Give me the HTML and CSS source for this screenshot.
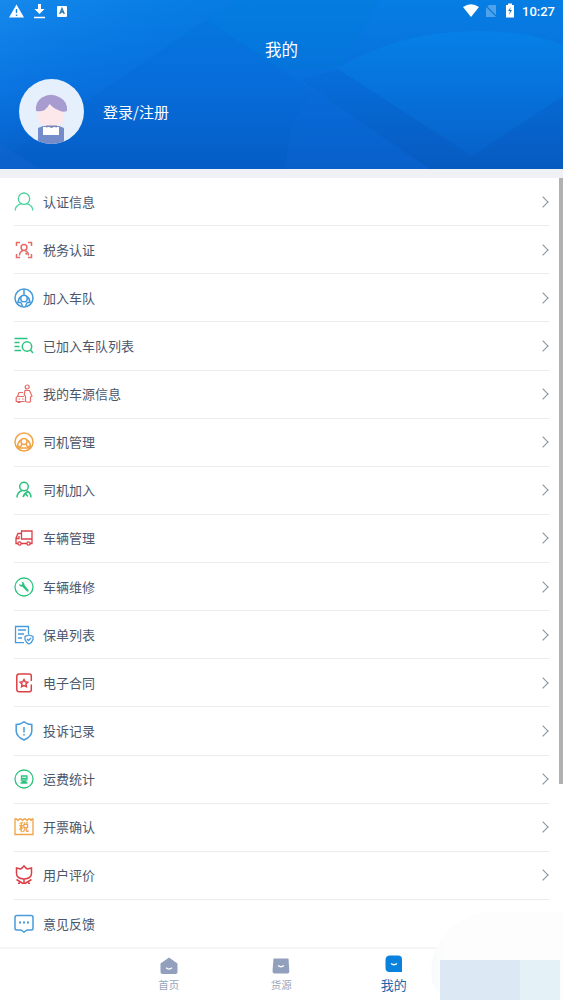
FILE: index.html
```html
<!DOCTYPE html>
<html lang="zh-CN">
<head>
<meta charset="utf-8">
<title>我的</title>
<link rel="stylesheet" href="styles.css">
</head>
<body>
<div class="app">
  <header class="hero">
    <svg class="hero-bg" viewBox="0 0 563 169" preserveAspectRatio="none">
      <defs>
        <linearGradient id="base" x1="0" y1="0" x2="0" y2="1"><stop offset="0" stop-color="#067ee3"/><stop offset=".5" stop-color="#086fdc"/><stop offset="1" stop-color="#065cc4"/></linearGradient>
        <linearGradient id="left" gradientUnits="userSpaceOnUse" x1="0" y1="0" x2="80" y2="145"><stop offset="0" stop-color="#1e8ef0" stop-opacity=".7"/><stop offset=".6" stop-color="#0a7ae6" stop-opacity=".3"/><stop offset="1" stop-color="#0a6ad8" stop-opacity="0"/></linearGradient>
        <linearGradient id="arc" x1="0" y1="0" x2="0" y2="1"><stop offset="0" stop-color="#0582e8" stop-opacity=".85"/><stop offset="1" stop-color="#0766cd" stop-opacity=".4"/></linearGradient>
        <linearGradient id="dark" x1="0" y1="0" x2="0" y2="1"><stop offset="0" stop-color="#0464d0" stop-opacity=".25"/><stop offset="1" stop-color="#085abb" stop-opacity=".5"/></linearGradient>
      </defs>
      <rect width="563" height="169" fill="url(#base)"/>
      <path d="M0 0H240L206 20 88 100 0 160Z" fill="url(#left)"/>
      <path d="M206 20 238 0H380L340 69 281 70Z" fill="#0079d8" fill-opacity=".3"/>
      <path d="M206 20 88 100 0 160V169H430L281 70Z" fill="#0863d5" fill-opacity=".18"/>
      <path d="M0 143 40 169H0Z" fill="#1767d2" fill-opacity=".4"/>
      <path d="M338 69Q395 32 475 31 530 31 563 45V96L472 156Z" fill="url(#arc)"/>
      <path d="M338 69 472 156 563 96V169H430L300 80Z" fill="url(#dark)"/>
      <path d="M313 91 430 169H286Q285 125 313 91Z" fill="#146fdd" fill-opacity=".18"/>
    </svg>
    <div class="status">
      <svg class="status-left" width="60" height="20" viewBox="0 0 60 20">
        <path d="M8.500 4.500 16 17.500H1Z" fill="#fff"/><path d="M8.500 9v4M8.500 14.500v1.500" stroke="#1684e4" stroke-width="1.400"/>
        <path d="M30 4h3v5h3.500l-5 5-5-5H30Z" fill="#fff"/><path d="M26 17.500h11" stroke="#fff" stroke-width="1.500"/>
        <rect x="49" y="6" width="10" height="11" rx="1" fill="#fff"/><path d="M51.700 14 54 8.500 56.300 14M52.500 12h3" fill="none" stroke="#2776b5" stroke-width="1.300"/>
      </svg>
      <div class="status-right">
        <svg width="54" height="20" viewBox="0 0 54 20">
          <path d="M0 7Q8 1.500 16 7L8 17Z" fill="#fff"/>
          <path d="M26 5h7v12H23V8Z" fill="#75b5f0" fill-opacity=".65"/><path d="m22 5 12 12" stroke="#087bdd" stroke-width="1.300"/>
          <path d="M43 5h2V3.500h4V5h2v12.500h-8Z" fill="#fff"/><path d="m48 7-3 4h2l-1 4 3-5h-2Z" fill="#1479c7"/>
        </svg>
        <span class="clock">10:27</span>
      </div>
    </div>
    <h1 class="title">我的</h1>
    <div class="profile">
      <svg class="avatar" width="65" height="65" viewBox="0 0 65 65">
        <defs><clipPath id="face"><circle cx="32.500" cy="32.500" r="32.500"/></clipPath></defs>
        <g clip-path="url(#face)">
          <rect width="65" height="65" fill="#e6effc"/>
          <path d="M19 29 31 25 45 30V40Q45 43 42 44L39 47H26L22 44Q19 43 19 39Z" fill="#fce7ea"/>
          <path d="M17 32Q16 23 23 18.500 32 13 41 18.500 49 23 48 32 44 34 39 31 34 29 30.500 25 26 34 17 32Z" fill="#a79bd0"/>
          <path d="M19 49 24 47H40L45 49V65H19Z" fill="#758cca"/>
          <path d="M24 48H40V56H24Z" fill="#fff"/><path d="M27 46.500h11v2l-3-.5-2.500 1-2.500-1-3 .5Z" fill="#7886bb"/>
        </g>
      </svg>
      <span class="login">登录/注册</span>
    </div>
  </header>
  <main class="list">
    <div class="row"><svg class="icon green-soft" viewBox="0 0 20 20"><circle cx="10" cy="6.700" r="5.700"/><path d="M1.300 18.500Q1 13.700 7.300 11.700M12.700 11.700Q19 13.700 18.700 18.500"/></svg><span class="label">认证信息</span><i class="chevron"></i></div>
    <div class="row"><svg class="icon red-soft bold" viewBox="0 0 20 20"><path d="M2.500 6V2.500H6M14 2.500h3.500V6M17.500 14v3.500H14M6 17.500H2.500V14"/><circle cx="10" cy="7.500" r="2.900"/><path d="M5.500 15.500q0-3.700 3.500-5M14.500 15.500q0-3.700-3.500-5M11.500 13l1.500 1.500"/></svg><span class="label">税务认证</span><i class="chevron"></i></div>
    <div class="row"><svg class="icon blue bold" viewBox="0 0 20 20"><circle cx="10" cy="10" r="9"/><circle cx="10" cy="10.500" r="3.300"/><path d="M10 1.200v6M7.200 8.500Q4.500 10 4.200 14M12.800 8.500q2.700 1.500 3 5.500M2.800 14.500h4L8.500 18M17.200 14.500h-4L11.500 18"/></svg><span class="label">加入车队</span><i class="chevron"></i></div>
    <div class="row"><svg class="icon green bold" viewBox="0 0 20 20"><path d="M.5 2.500h13M.5 6.500h5M.5 10.500h5M.5 14.500h6.500M16.500 14l2.500 3"/><circle cx="13" cy="10.500" r="4.700"/></svg><span class="label">已加入车队列表</span><i class="chevron"></i></div>
    <div class="row"><svg class="icon red-soft car" viewBox="0 0 20 20"><circle cx="13.200" cy="3" r="2"/><path d="M11 6.500h4.500l2.500 5.500-1.500 1v4.500q-1.500 1.500-5 0v-5l-1.300-2ZM9 8.500H5L3.500 12.500 2.200 13.500v4h8.300M4 17.500v1h2v-1M3.500 12.500H10M4.500 15H6M8 15h1.500"/></svg><span class="label">我的车源信息</span><i class="chevron"></i></div>
    <div class="row"><svg class="icon orange bold" viewBox="0 0 20 20"><circle cx="10" cy="10" r="9"/><circle cx="10" cy="9.500" r="3"/><path d="M7.200 8Q4 9.500 3.500 14.500H7M12.800 8q3.200 1.500 3.700 6.500H13M7 14.500l1-2.500M13 14.500 12 12M4 16h12"/></svg><span class="label">司机管理</span><i class="chevron"></i></div>
    <div class="row"><svg class="icon green bold" viewBox="0 0 20 20"><circle cx="10" cy="6.500" r="4.300"/><path d="M3 17.500q0-5 5-7M12 10.500q5 2 5 7M9 17q1-3.500 5-5.500M11.500 14l2.500 2.500"/></svg><span class="label">司机加入</span><i class="chevron"></i></div>
    <div class="row"><svg class="icon red" viewBox="0 0 20 20"><path d="M7.500 3H18v8H7.500ZM7.500 5.500H4L2 10v5.500h2M7 15.500h6M16 15.500h2V11M5 8v2.500H2.500"/><circle cx="5.500" cy="15.500" r="1.600"/><circle cx="14.500" cy="15.500" r="1.600"/></svg><span class="label">车辆管理</span><i class="chevron"></i></div>
    <div class="row"><svg class="icon green" viewBox="0 0 20 20"><circle cx="10" cy="10" r="9"/><path class="fill" d="M7.500 4.800Q10.500 5 10.500 8L14.500 13Q15 14 14.200 14.500 13.500 15 12.500 14L8.500 9.700Q5.500 10 5 7L7.200 8 8.500 7Z" stroke="none"/></svg><span class="label">车辆维修</span><i class="chevron"></i></div>
    <div class="row"><svg class="icon blue" viewBox="0 0 20 20"><path d="M10 17.700H1.500V1.500h13V9M4 5h8M4 9h6M4 13h4"/><path d="m15 10 4 1.500v3q-1 3-4 4.500-3-1.500-4-4.500v-3ZM13 14l1.500 1.500L17 13"/></svg><span class="label">保单列表</span><i class="chevron"></i></div>
    <div class="row"><svg class="icon red bold" viewBox="0 0 20 20"><path d="M17.300 8V3q0-2-2-2h-10q-2.500 0-2.500 2.500v13q0 2.300 2.500 2.300h10q2 0 2-2V11.500"/><path d="m10 6.500 1.200 2.300 2.600.4-1.800 1.900.4 2.600-2.400-1.100-2.400 1.100.4-2.600-1.800-1.900 2.600-.4Z"/></svg><span class="label">电子合同</span><i class="chevron"></i></div>
    <div class="row"><svg class="icon blue bold" viewBox="0 0 20 20"><path d="M10 .8Q14 3.500 17.800 3.500V10q0 5.500-7.800 9-7.800-3.500-7.800-9V3.500Q6 3.500 10 .8ZM10 6v5.500M10 13v1.500"/></svg><span class="label">投诉记录</span><i class="chevron"></i></div>
    <div class="row"><svg class="icon green" viewBox="0 0 20 20"><circle cx="10" cy="10" r="9"/><path d="M7.500 7h5.500v2.500H7.500ZM6.500 11.200h7M7.500 12.700h5M6.500 14h7"/></svg><span class="label">运费统计</span><i class="chevron"></i></div>
    <div class="row"><svg class="icon orange" viewBox="0 0 20 20"><path d="M1 2h1.500L4 3.500 5.500 2h1.500L8.500 3.500 10 2h1.500L13 3.500 14.500 2H16l1 1.500L18 2h1v15.500H1Z"/><text class="stamp" x="5" y="14">税</text></svg><span class="label">开票确认</span><i class="chevron"></i></div>
    <div class="row"><svg class="icon red bold" viewBox="0 0 20 20"><path d="M6.500 4Q8 3.500 10 1q2 2.500 3.500 3L17.500 3v5.500q0 5-7.500 5.500-7.500-.5-7.500-5.500V3ZM10 14v5M2.500 14.500 9 18.500M17.500 14.500 11 18.500M4 18.200h2M14 18.200h2"/></svg><span class="label">用户评价</span><i class="chevron"></i></div>
    <div class="row last"><svg class="icon blue bold" viewBox="0 0 20 20"><path d="M3 1.500h14q2 0 2 2v11q0 1.500-2 1.500h-4l-3 2-3-2H3q-2 0-2-1.500v-11q0-2 2-2Z"/><path d="M5 8.500h2M9 8.500h2M13 8.500h2" stroke-width="2"/></svg><span class="label">意见反馈</span><i class="chevron"></i></div>
  </main>
  <nav class="tabs">
    <div class="tab"><svg width="18" height="18" viewBox="0 0 18 18"><path d="M9 .5 17.500 6.500V15q0 2-2 2H2.500q-2 0-2-2V6.500Z" fill="#929fbd"/><path d="M6 10.800q3 2.500 6 0" fill="none" stroke="#fff" stroke-width="1.300"/></svg><span>首页</span></div>
    <div class="tab"><svg width="18" height="18" viewBox="0 0 18 18"><path d="M1.500 1.500h15L17.300 14q.2 2.500-2 2.500H2.500q-2 0-2-2.500Z" fill="#929fbd"/><path d="M6 8.500q3 2.500 6 0" fill="none" stroke="#fff" stroke-width="1.300"/></svg><span>货源</span></div>
    <div class="tab active"><svg width="18" height="18" viewBox="0 0 18 18"><path d="M5 .5h8q4 0 4 4V17H4.500q-4 0-4-4V5Q.5.500 5 .5Z" fill="#0882dc"/><path d="M6 8.500q3 2.500 6 0" fill="none" stroke="#fff" stroke-width="1.300"/></svg><span>我的</span></div>
  </nav>
  <div class="scrollbar"></div>
  <div class="float"><div class="swatch swatch-a"></div><div class="swatch swatch-b"></div></div>
</div>
</body>
</html>
```
FILE: styles.css
```css
* { box-sizing: border-box; }
body {
  margin: 0;
  font-family: "Noto Sans CJK SC", sans-serif;
  color: #4a566c;
}
.app {
  position: relative;
  width: 563px;
  height: 1000px;
  overflow: hidden;
  background: #fff;
  display: flex;
  flex-direction: column;
}
.hero {
  position: relative;
  height: 169px;
  flex: none;
  color: #fff;
}
.hero-bg {
  position: absolute;
  inset: 0;
  width: 100%;
  height: 100%;
}
.status {
  position: relative;
  display: flex;
  justify-content: space-between;
  height: 23px;
  padding: 0 8px;
}
.status-right { display: flex; gap: 5px; }
.clock {
  font: 500 13px/23px Roboto, sans-serif;
}
.title {
  position: relative;
  margin: 14px 0 0;
  text-align: center;
  font-size: 16.5px;
  font-weight: 400;
  line-height: 24px;
}
.profile {
  position: relative;
  display: flex;
  align-items: center;
  gap: 19px;
  padding: 18px 0 0 19px;
}
.login { font-size: 15px; line-height: 22px; }
.list {
  flex: none;
  border-top: 9px solid #f0f1f4;
  padding: 0 14px;
}
.row {
  display: flex;
  align-items: center;
  height: 48.13px;
  border-bottom: 1px solid #ebecee;
}
.row.last { height: 47px; padding-top: 1px; border: 0; }
.icon {
  width: 20px;
  height: 20px;
  flex: none;
  fill: none;
  stroke: currentColor;
  stroke-width: 1.3;
  overflow: visible;
}
.car { stroke-width: 1.2; }
.bold { stroke-width: 1.5; }
.fill { fill: currentColor; }
.stamp { font-size: 10px; font-weight: 700; fill: currentColor; stroke: none; }
.green { color: #2bc47e; }
.green-soft { color: #50d3a0; }
.red { color: #dc4047; }
.red-soft { color: #e46b67; }
.blue { color: #489bdb; }
.orange { color: #f0a347; }
.label {
  flex: 1;
  margin-left: 9px;
  font-size: 13px;
  line-height: 20px;
}
.chevron {
  width: 8px;
  height: 8px;
  margin-right: 2px;
  border: solid #7f93a3;
  border-width: 1.2px 1.2px 0 0;
  transform: rotate(45deg);
}
.row.last .chevron { opacity: .06; }
.tabs {
  flex: 1;
  display: flex;
  padding: 0 113px 0 112.5px;
  border-top: 2px solid #f4f5f6;
}
.tab {
  flex: 1;
  display: flex;
  flex-direction: column;
  align-items: center;
  padding-top: 8px;
  font-size: 10.5px;
  line-height: 20px;
  color: #9aa5bd;
}
.tab.active {
  padding-top: 6px;
  font-size: 13px;
  line-height: 23px;
  color: #1767ae;
}
.scrollbar {
  position: absolute;
  top: 178px;
  right: 0;
  width: 4px;
  height: 606px;
  background: #b1b1b1;
}
.float {
  position: absolute;
  left: 431px;
  top: 912px;
  width: 132px;
  height: 88px;
  padding: 48px 3px 0 9px;
  display: flex;
  border-radius: 70px 0 0 30px;
  background: linear-gradient(90deg, #f8fafc, #fdfdfd 10%);
}
.swatch { height: 40px; }
.swatch-a { width: 80px; background: #dce9f4; }
.swatch-b { width: 40px; background: #e4f1f7; }
```
